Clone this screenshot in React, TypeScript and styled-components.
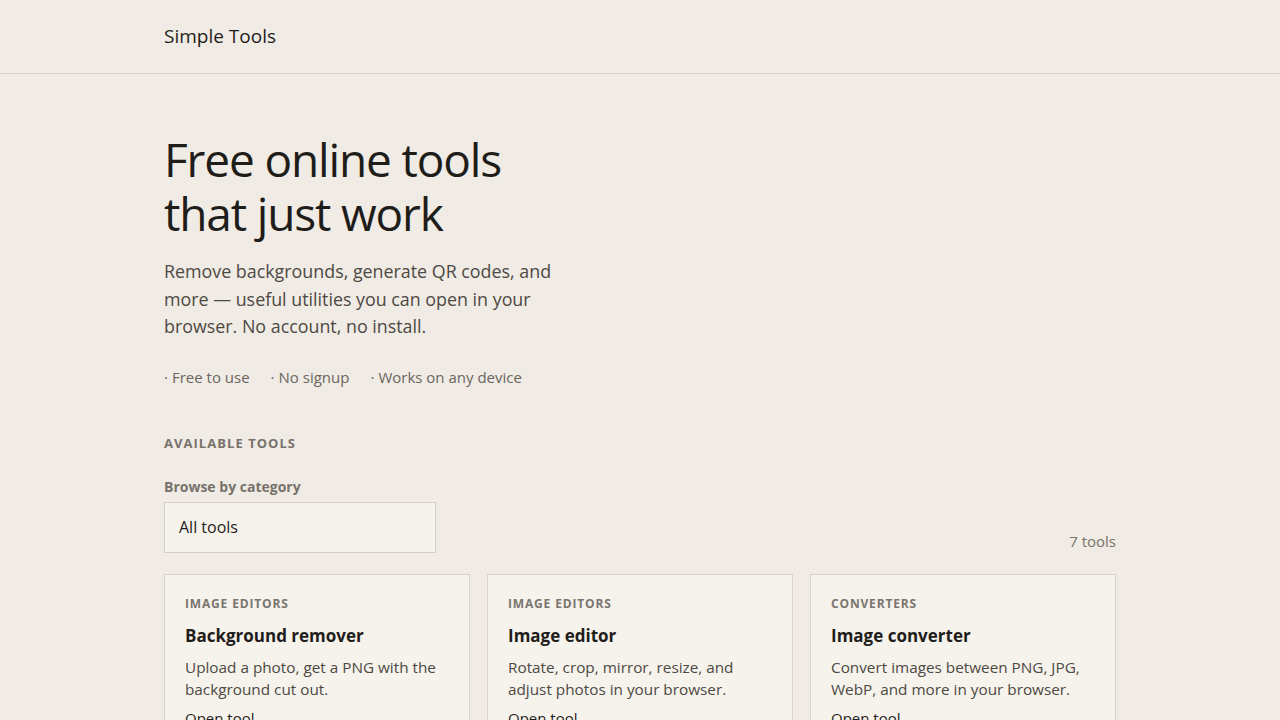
import React from "react";
import styled, { createGlobalStyle } from "styled-components";

const Global = createGlobalStyle`
  html, body { margin: 0; padding: 0; }
  body {
    background: #f0ebe4;
    font-family: "Open Sans", "Noto Sans", sans-serif;
    color: #1f1d1a;
  }
  * { box-sizing: border-box; }
`;

const Header = styled.header`
  height: 74px;
  border-bottom: 1px solid #d9d3ca;
  display: flex;
  align-items: center;
`;

const Container = styled.div`
  width: 952px;
  margin: 0 auto;
`;

const Brand = styled.div`
  font-size: 19px;
  color: #1f1d1a;
  padding-bottom: 2px;
`;

const Hero = styled.section`
  padding-top: 58px;
`;

const Title = styled.h1`
  margin: 0;
  font-size: 46px;
  font-weight: 400;
  line-height: 54px;
  letter-spacing: -0.025em;
  color: #1f1d1a;
`;

const Lead = styled.p`
  margin: 18px 0 0;
  max-width: 400px;
  font-size: 17.85px;
  line-height: 27.5px;
  color: #4d4943;
`;

const Features = styled.ul`
  list-style: none;
  margin: 26px 0 0;
  padding: 0;
  display: flex;
  gap: 21px;
  font-size: 15px;
  color: #6b665f;
`;

const Feature = styled.li`
  &::before {
    content: "·";
    margin-right: 4px;
  }
`;

const SectionLabel = styled.h2`
  margin: 47px 0 0;
  font-size: 13px;
  font-weight: 700;
  letter-spacing: 0.08em;
  text-transform: uppercase;
  color: #77726b;
`;

const Controls = styled.div`
  margin-top: 25px;
  display: flex;
  justify-content: space-between;
  align-items: flex-end;
`;

const Field = styled.div`
  display: flex;
  flex-direction: column;
  gap: 6px;
`;

const FieldLabel = styled.label`
  font-size: 14px;
  font-weight: 700;
  color: #77726b;
`;

const Select = styled.div`
  width: 272px;
  height: 51px;
  border: 1px solid #d4cec5;
  background: #f6f2ec;
  padding: 0 14px;
  display: flex;
  align-items: center;
  font-size: 16px;
  color: #1f1d1a;
`;

const Count = styled.div`
  font-size: 15px;
  color: #77726b;
  padding-bottom: 2px;
`;

const Grid = styled.div`
  margin-top: 21px;
  display: grid;
  grid-template-columns: repeat(3, 1fr);
  gap: 17px;
`;

const Card = styled.article`
  border: 1px solid #d9d3ca;
  background: #f6f2ec;
  padding: 20px 20px 24px;
`;

const Category = styled.div`
  font-size: 12px;
  font-weight: 700;
  letter-spacing: 0.07em;
  text-transform: uppercase;
  color: #7a756e;
`;

const CardTitle = styled.h3`
  margin: 12px 0 0;
  font-size: 17px;
  font-weight: 700;
  color: #1f1d1a;
`;

const CardDesc = styled.p`
  margin: 9px 0 0;
  font-size: 15.3px;
  line-height: 22px;
  color: #4d4943;
`;

const OpenLink = styled.a`
  display: inline-block;
  margin-top: 8px;
  font-size: 15px;
  color: #1f1d1a;
  text-decoration: none;
`;

const tools = [
  {
    cat: "Image editors",
    title: "Background remover",
    desc: "Upload a photo, get a PNG with the background cut out.",
  },
  {
    cat: "Image editors",
    title: "Image editor",
    desc: "Rotate, crop, mirror, resize, and adjust photos in your browser.",
  },
  {
    cat: "Converters",
    title: "Image converter",
    desc: "Convert images between PNG, JPG, WebP, and more in your browser.",
  },
];

export default function App() {
  return (
    <>
      <Global />
      <Header>
        <Container>
          <Brand>Simple Tools</Brand>
        </Container>
      </Header>
      <Container>
        <Hero>
          <Title>
            Free online tools
            <br />
            that just work
          </Title>
          <Lead>
            Remove backgrounds, generate QR codes, and more — useful utilities
            you can open in your browser. No account, no install.
          </Lead>
          <Features>
            <Feature>Free to use</Feature>
            <Feature>No signup</Feature>
            <Feature>Works on any device</Feature>
          </Features>
        </Hero>
        <SectionLabel>Available tools</SectionLabel>
        <Controls>
          <Field>
            <FieldLabel>Browse by category</FieldLabel>
            <Select>All tools</Select>
          </Field>
          <Count>7 tools</Count>
        </Controls>
        <Grid>
          {tools.map((t) => (
            <Card key={t.title}>
              <Category>{t.cat}</Category>
              <CardTitle>{t.title}</CardTitle>
              <CardDesc>{t.desc}</CardDesc>
              <OpenLink href="#">Open tool</OpenLink>
            </Card>
          ))}
        </Grid>
      </Container>
    </>
  );
}
